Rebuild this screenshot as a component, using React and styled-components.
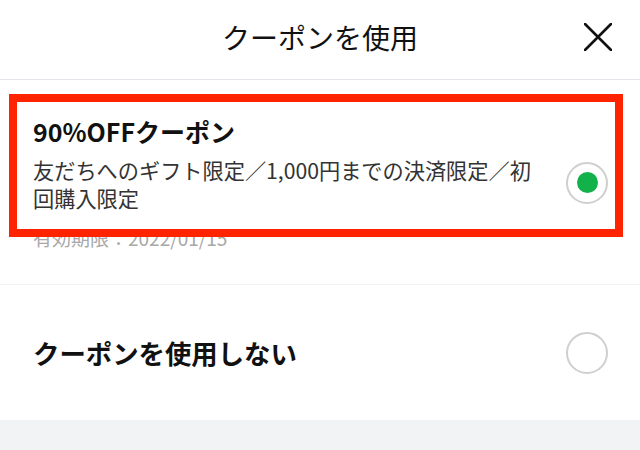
import React from 'react'
import styled, { createGlobalStyle } from 'styled-components'

const Global = createGlobalStyle`
  body {
    margin: 0;
    background: #fff;
    font-family: "Noto Sans CJK JP", "Noto Sans", sans-serif;
    color: #111;
  }
`

const Page = styled.div`
  width: 640px;
  height: 450px;
  display: flex;
  flex-direction: column;
  overflow: hidden;
`

const Header = styled.header`
  height: 80px;
  display: grid;
  grid-template-columns: 1fr auto 1fr;
  align-items: center;
  border-bottom: 1px solid #e4e4ea;
  padding-bottom: 6px;
  box-sizing: border-box;
`

const Title = styled.h1`
  grid-column: 2;
  margin: 0;
  font-size: 28px;
  font-weight: 400;
  color: #111;
`

const CloseButton = styled.button`
  justify-self: end;
  margin-right: 28px;
  padding: 0;
  border: none;
  background: none;
  width: 28px;
  height: 28px;
  display: flex;
`

const Row = styled.div`
  position: relative;
  display: flex;
  align-items: center;
  padding: ${p => p.$pad};
  height: ${p => p.$height || 'auto'};
  box-sizing: border-box;
  border-bottom: ${p => (p.$divider ? '1px solid #f3f3f5' : 'none')};
`

const TextCol = styled.div`
  width: 512px;
  display: flex;
  flex-direction: column;
`

const CouponName = styled.div`
  font-size: ${p => p.$size};
  line-height: 32px;
  font-weight: 700;
  color: #111;
`

const Desc = styled.div`
  margin-top: 9px;
  font-size: 21.2px;
  line-height: 28px;
  color: #333;
`

const Expiry = styled.div`
  margin-top: 14px;
  font-size: 19px;
  line-height: 24px;
  color: #a8a8a8;
`

const Radio = styled.span`
  margin-left: auto;
  margin-right: 32px;
  width: 42px;
  height: 42px;
  box-sizing: border-box;
  border-radius: 50%;
  border: 2px solid #cfcfcf;
  display: flex;
  align-items: center;
  justify-content: center;
  &::after {
    content: '';
    width: 21px;
    height: 21px;
    border-radius: 50%;
    background: ${p => (p.$checked ? '#12b14a' : 'transparent')};
  }
`

const Highlight = styled.div`
  position: absolute;
  top: 14px;
  left: 9px;
  right: 17px;
  height: 143px;
  box-sizing: border-box;
  border: 8px solid #ff2400;
  pointer-events: none;
`

const Filler = styled.div`
  flex: 1;
  background: #f2f3f5;
`

const App = () => {
  return (
    <Page>
      <Global />
      <Header>
        <Title>クーポンを使用</Title>
        <CloseButton aria-label="閉じる">
          <svg width="28" height="28" viewBox="0 0 28 28">
            <path d="M1 1 L27 27 M27 1 L1 27" stroke="#111" strokeWidth="2.6" strokeLinecap="round" />
          </svg>
        </CloseButton>
      </Header>
      <Row $pad="35px 0 34px 33px" $divider>
        <TextCol>
          <CouponName $size="25px">90%OFFクーポン</CouponName>
          <Desc>友だちへのギフト限定／1,000円までの決済限定／初回購入限定</Desc>
          <Expiry>有効期限：2022/01/15</Expiry>
        </TextCol>
        <Radio $checked />
        <Highlight />
      </Row>
      <Row $pad="0 0 0 33px" $height="135px">
        <CouponName $size="26.4px">クーポンを使用しない</CouponName>
        <Radio />
      </Row>
      <Filler />
    </Page>
  )
}

export default App
